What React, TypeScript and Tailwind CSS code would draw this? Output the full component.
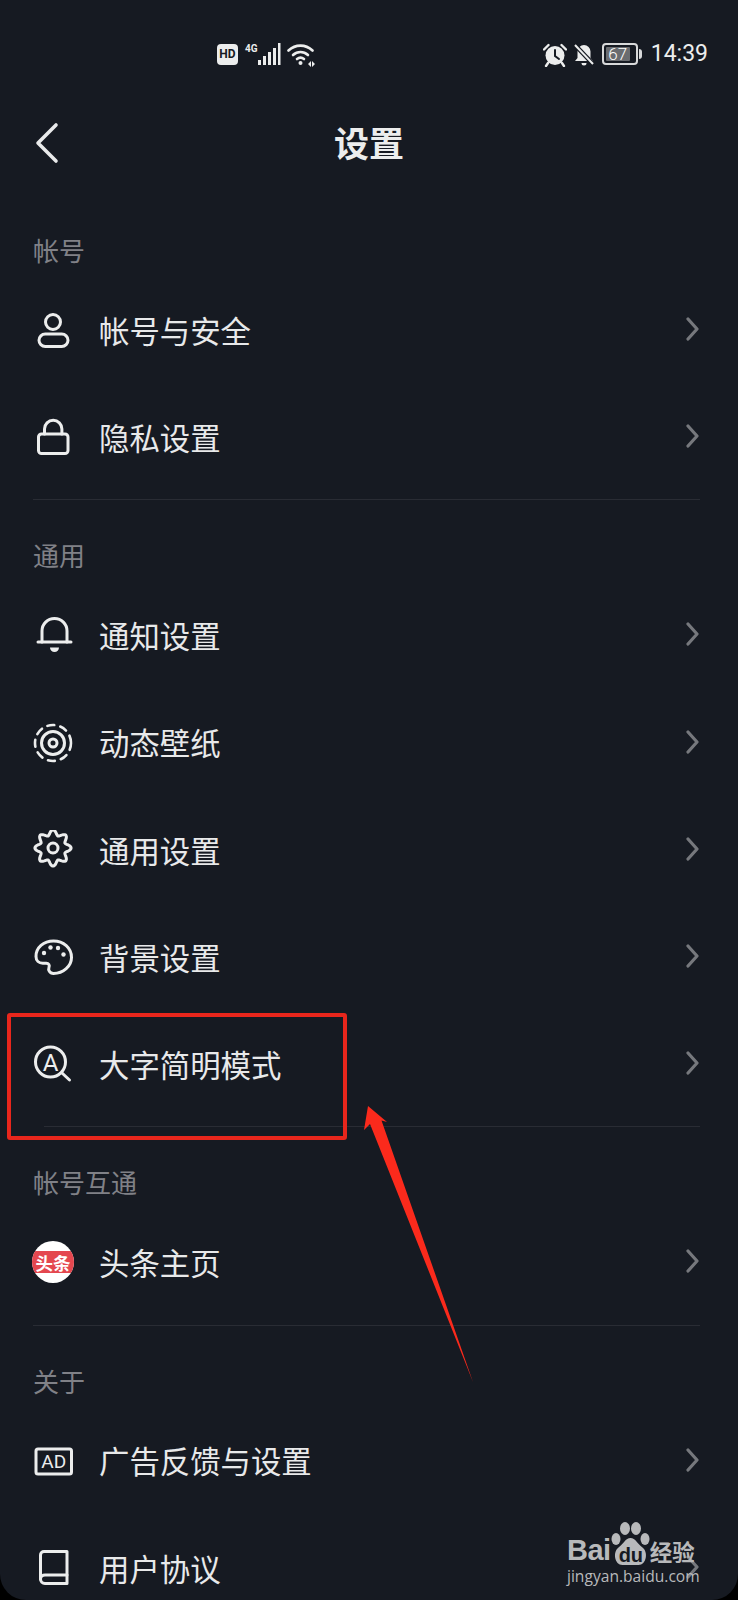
import { ReactNode } from 'react'

const cjk = { fontFamily: '"Noto Sans CJK SC", "Noto Sans", sans-serif' }

function Ico({ children }: { children: ReactNode }) {
	return (
		<svg
			width="42"
			height="42"
			viewBox="0 0 42 42"
			fill="none"
			stroke="#eceded"
			strokeWidth="3"
			strokeLinecap="round"
			strokeLinejoin="round"
			className="shrink-0"
		>
			{children}
		</svg>
	)
}

const gearPath = (() => {
	const pts: string[] = []
	for (let i = 0; i < 96; i++) {
		const t = (i / 96) * Math.PI * 2
		const r = 15.5 + 2.6 * Math.cos(8 * t)
		pts.push(`${(20 + r * Math.sin(t)).toFixed(2)} ${(18 - r * Math.cos(t)).toFixed(2)}`)
	}
	return 'M' + pts.join('L') + 'Z'
})()

const icons: Record<string, ReactNode> = {
	user: (
		<Ico>
			<circle cx="20" cy="11" r="7.5" />
			<rect x="6" y="23" width="29" height="12.5" rx="6.25" />
		</Ico>
	),
	lock: (
		<Ico>
			<rect x="5.5" y="16" width="29.5" height="19.5" rx="3" />
			<path d="M11.5 16V11a8.7 8.7 0 0 1 17.4 0v5" />
		</Ico>
	),
	bell: (
		<Ico>
			<path d="M9 26V15a12.5 12.5 0 0 1 25 0v11" />
			<path d="M5 26h33" />
			<path d="M17 31.5h9a4.5 4.5 0 0 1-9 0Z" fill="#eceded" stroke="none" />
		</Ico>
	),
	wallpaper: (
		<Ico>
			<circle cx="20" cy="20" r="18" strokeDasharray="7 6.1" strokeWidth="2.6" />
			<circle cx="20" cy="20" r="11.5" />
			<circle cx="20" cy="20" r="4" />
		</Ico>
	),
	gear: (
		<Ico>
			<path d={gearPath} />
			<circle cx="20" cy="18" r="5" />
		</Ico>
	),
	palette: (
		<Ico>
			<path d="M20.5 3C10.5 3 3 9.8 3 18.4c0 4.4 3 6.8 6.8 6.8h3.4c2.6 0 3.6 2 2.8 4-1 2.6.4 6.3 4.5 6.3C30.4 35.5 38.5 28 38.5 19.5 38.5 10 30.5 3 20.5 3Z" />
			<circle cx="11" cy="15" r="2.2" fill="#eceded" stroke="none" />
			<circle cx="17.5" cy="9.5" r="2.2" fill="#eceded" stroke="none" />
			<circle cx="25" cy="10" r="2.2" fill="#eceded" stroke="none" />
			<circle cx="30.5" cy="16.5" r="2.2" fill="#eceded" stroke="none" />
		</Ico>
	),
	font: (
		<Ico>
			<circle cx="17.5" cy="17" r="15" />
			<path d="M29 28l7.5 7" />
			<text x="17.5" y="25.5" textAnchor="middle" fontSize="24" fill="#eceded" stroke="none" fontFamily="Roboto, sans-serif">
				A
			</text>
		</Ico>
	),
	ad: (
		<Ico>
			<rect x="3" y="8" width="35.5" height="25" rx="2" />
			<text x="20.8" y="27" textAnchor="middle" fontSize="19" fill="#eceded" stroke="none" fontFamily="Roboto, sans-serif">
				AD
			</text>
		</Ico>
	),
	book: (
		<Ico>
			<path d="M11 3.5h23v32H12c-2.5 0-4.5-2-4.5-4.5V7c0-2 1.5-3.5 3.5-3.5Z" />
			<path d="M7.5 31c0-2.5 2-4 4.5-4h22" />
		</Ico>
	),
	toutiao: (
		<div className="w-[42px] h-[42px] -ml-px -mt-[3px] rounded-full bg-white overflow-hidden shrink-0 flex items-center">
			<div className="w-full h-[22px] bg-[#e4474f] flex items-center justify-center">
				<span className="text-white text-[17.5px] font-bold leading-none whitespace-nowrap" style={cjk}>
					头条
				</span>
			</div>
		</div>
	),
}

function Chevron() {
	return (
		<svg width="13" height="24" viewBox="0 0 13 24" fill="none" stroke="#76787d" strokeWidth="3.2" strokeLinecap="round" strokeLinejoin="round" className="shrink-0 -mt-[5px]">
			<path d="M2 2l9 10-9 10" />
		</svg>
	)
}

function Row({ icon, label }: { icon: string; label: string }) {
	return (
		<div className="h-[107.2px] flex items-center pl-[33px] pr-[39px]">
			<div className="w-[66px] shrink-0 flex items-center">{icons[icon]}</div>
			<span className="flex-1 pb-[3px] text-[30.4px] leading-none text-[#e8e9ea]" style={cjk}>
				{label}
			</span>
			<Chevron />
		</div>
	)
}

function Section({
	title,
	rows,
	last,
	inset,
}: {
	title: string
	rows: [string, string][]
	last?: boolean
	inset?: boolean
}) {
	return (
		<section>
			<div className="h-10 flex items-center pl-[33px] pb-1 text-[26px] leading-none text-[#808187]" style={cjk}>
				{title}
			</div>
			<div className="mt-[6px]">
				{rows.map(r => (
					<Row key={r[1]} icon={r[0]} label={r[1]} />
				))}
			</div>
			{!last && (
				<div className={`mt-[7px] mb-[37px] mr-[38px] h-px bg-[#292c34] ${inset ? 'ml-[44px]' : 'ml-[33px]'}`} />
			)}
		</section>
	)
}

function StatusBar() {
	return (
		<div className="h-[104px] pt-[43px] pl-[217px] pr-[30px] flex justify-between items-start text-[#eceded]">
			<div className="flex items-start">
				<div className="w-[21px] h-[21px] mt-px rounded-[4px] bg-[#eceded] text-[#161a22] text-[12px] font-bold leading-[21px] text-center" style={{ fontFamily: 'Roboto, sans-serif' }}>
					HD
				</div>
				<span className="ml-[7px] text-[10px] font-bold leading-[12px]" style={{ fontFamily: 'Roboto, sans-serif' }}>
					4G
				</span>
				<svg width="24" height="22" viewBox="0 0 24 22" fill="#eceded" className="-ml-[1px]">
					<rect x="1" y="17" width="3" height="5" />
					<rect x="6" y="13" width="3" height="9" />
					<rect x="11" y="9" width="3" height="13" />
					<rect x="16" y="5" width="3" height="17" />
					<rect x="21" y="0" width="2.5" height="22" />
				</svg>
				<svg width="28" height="24" viewBox="0 0 28 24" fill="none" stroke="#eceded" strokeWidth="2.6" strokeLinecap="round" className="ml-[6px]">
					<path d="M1.5 7.5c7-6.5 17-6.5 24 0" />
					<path d="M6 12c4.5-4 10.5-4 15 0" />
					<path d="M10 16c2.5-2 4.5-2 7 0" />
					<circle cx="13.5" cy="20" r="2" fill="#eceded" stroke="none" />
					<path d="M21 21l3-3v6zM25 18l3 3-3 3z" fill="#eceded" stroke="none" />
				</svg>
			</div>
			<div className="flex items-start">
				<svg width="24" height="24" viewBox="0 0 24 24" fill="#eceded">
					<circle cx="12" cy="12.5" r="9.5" />
					<path d="M1 6.5 5.5 2M23 6.5 18.5 2M5 20l-2 3M19 20l2 3" stroke="#eceded" strokeWidth="2.4" strokeLinecap="round" />
					<path d="M12 7v6l4 3" stroke="#161a22" strokeWidth="2" fill="none" strokeLinecap="round" />
				</svg>
				<svg width="22" height="23" viewBox="0 0 22 23" className="ml-[6px]" fill="#eceded">
					<path d="M11 2a6.5 6.5 0 0 0-6.5 6.5V15L2 18h18l-2.5-3V8.5A6.5 6.5 0 0 0 11 2Z" />
					<path d="M8.5 20h5a2.5 2.5 0 0 1-5 0Z" />
					<path d="M2 2l18 19" stroke="#161a22" strokeWidth="4.5" />
					<path d="M2 2l18 19" stroke="#eceded" strokeWidth="2" />
				</svg>
				<div className="ml-[7px] w-[36px] h-[22px] rounded-[4px] border-2 border-[#d8d9da] p-[2px] flex">
					<div className="w-[24px] h-full bg-[#6a6c70] rounded-[1px] flex items-center justify-center">
						<span className="text-white text-[17px] leading-none" style={{ fontFamily: 'Roboto, sans-serif', fontWeight: 300 }}>
							67
						</span>
					</div>
				</div>
				<div className="ml-[1px] mt-[6px] w-[3px] h-[10px] bg-[#d8d9da] rounded-r-sm" />
				<span className="ml-[9px] -mt-[1px] text-[23px] leading-[24px]" style={{ fontFamily: 'Roboto, sans-serif', fontWeight: 400 }}>
					14:39
				</span>
			</div>
		</div>
	)
}

function Watermark() {
	return (
		<div className="absolute left-[567px] top-[1521px] w-[134px] text-[#b8b9bb]">
			<div className="flex items-end h-[45px] whitespace-nowrap">
				<span className="text-[29px] font-bold leading-[32px] tracking-[-0.5px]" style={{ fontFamily: '"Liberation Sans", sans-serif' }}>
					Bai
				</span>
				<div className="relative w-[39px] h-[45px] shrink-0">
					<svg width="39" height="45" viewBox="0 0 39 45" fill="#b8b9bb" className="absolute inset-0">
						<ellipse cx="5" cy="18" rx="4.5" ry="6" />
						<ellipse cx="14" cy="7.5" rx="5" ry="6.5" />
						<ellipse cx="25" cy="7.5" rx="5" ry="6.5" />
						<ellipse cx="34" cy="18" rx="4.5" ry="6" />
						<path d="M19.5 17c5 0 7 6 12 9.5 6 4.5 4 17.5-4 17.5h-16c-8 0-10-13-4-17.5 5-3.5 7-9.5 12-9.5Z" />
					</svg>
					<span className="absolute left-[8px] top-[25px] text-[20px] font-bold leading-[18px] text-[#161a22]" style={{ fontFamily: '"Liberation Sans", sans-serif' }}>
						du
					</span>
				</div>
				<span className="text-[22.5px] font-bold leading-[30px]" style={cjk}>
					经验
				</span>
			</div>
			<div className="text-[15.6px] leading-[20px] whitespace-nowrap" style={{ fontFamily: '"Open Sans", sans-serif' }}>
				jingyan.baidu.com
			</div>
		</div>
	)
}

export default function App() {
	return (
		<div className="relative w-[738px] h-[1600px] bg-black overflow-hidden">
			<div className="h-full bg-[#161a22] rounded-b-[26px] overflow-hidden">
				<StatusBar />
				<div className="h-[78px] grid grid-cols-[1fr_auto_1fr] items-center">
					<svg width="24" height="42" viewBox="0 0 24 42" fill="none" stroke="#e9eaeb" strokeWidth="3.6" strokeLinecap="round" strokeLinejoin="round" className="ml-[35px]">
						<path d="M21 3 3 21l18 18" />
					</svg>
					<div className="pb-1 text-[35px] font-bold leading-none text-[#eceded]" style={cjk}>
						设置
					</div>
				</div>
				<div className="h-[50px]" />
				<Section title="帐号" rows={[['user', '帐号与安全'], ['lock', '隐私设置']]} />
				<Section
					title="通用"
					inset
					rows={[
						['bell', '通知设置'],
						['wallpaper', '动态壁纸'],
						['gear', '通用设置'],
						['palette', '背景设置'],
						['font', '大字简明模式'],
					]}
				/>
				<Section title="帐号互通" rows={[['toutiao', '头条主页']]} />
				<Section title="关于" last rows={[['ad', '广告反馈与设置'], ['book', '用户协议']]} />
			</div>

			{/* annotation drawn over the screenshot */}
			<div className="absolute left-[7px] top-[1013px] w-[340px] h-[127px] border-[4px] border-[#e8261c] rounded-[3px]" />
			<svg width="738" height="320" viewBox="0 1090 738 320" className="absolute left-0 top-[1090px]">
				<path d="M368 1106 387 1122 381.5 1120.5 473 1382 370 1124 364 1130Z" fill="#fb2a1c" />
			</svg>
			<Watermark />
		</div>
	)
}
